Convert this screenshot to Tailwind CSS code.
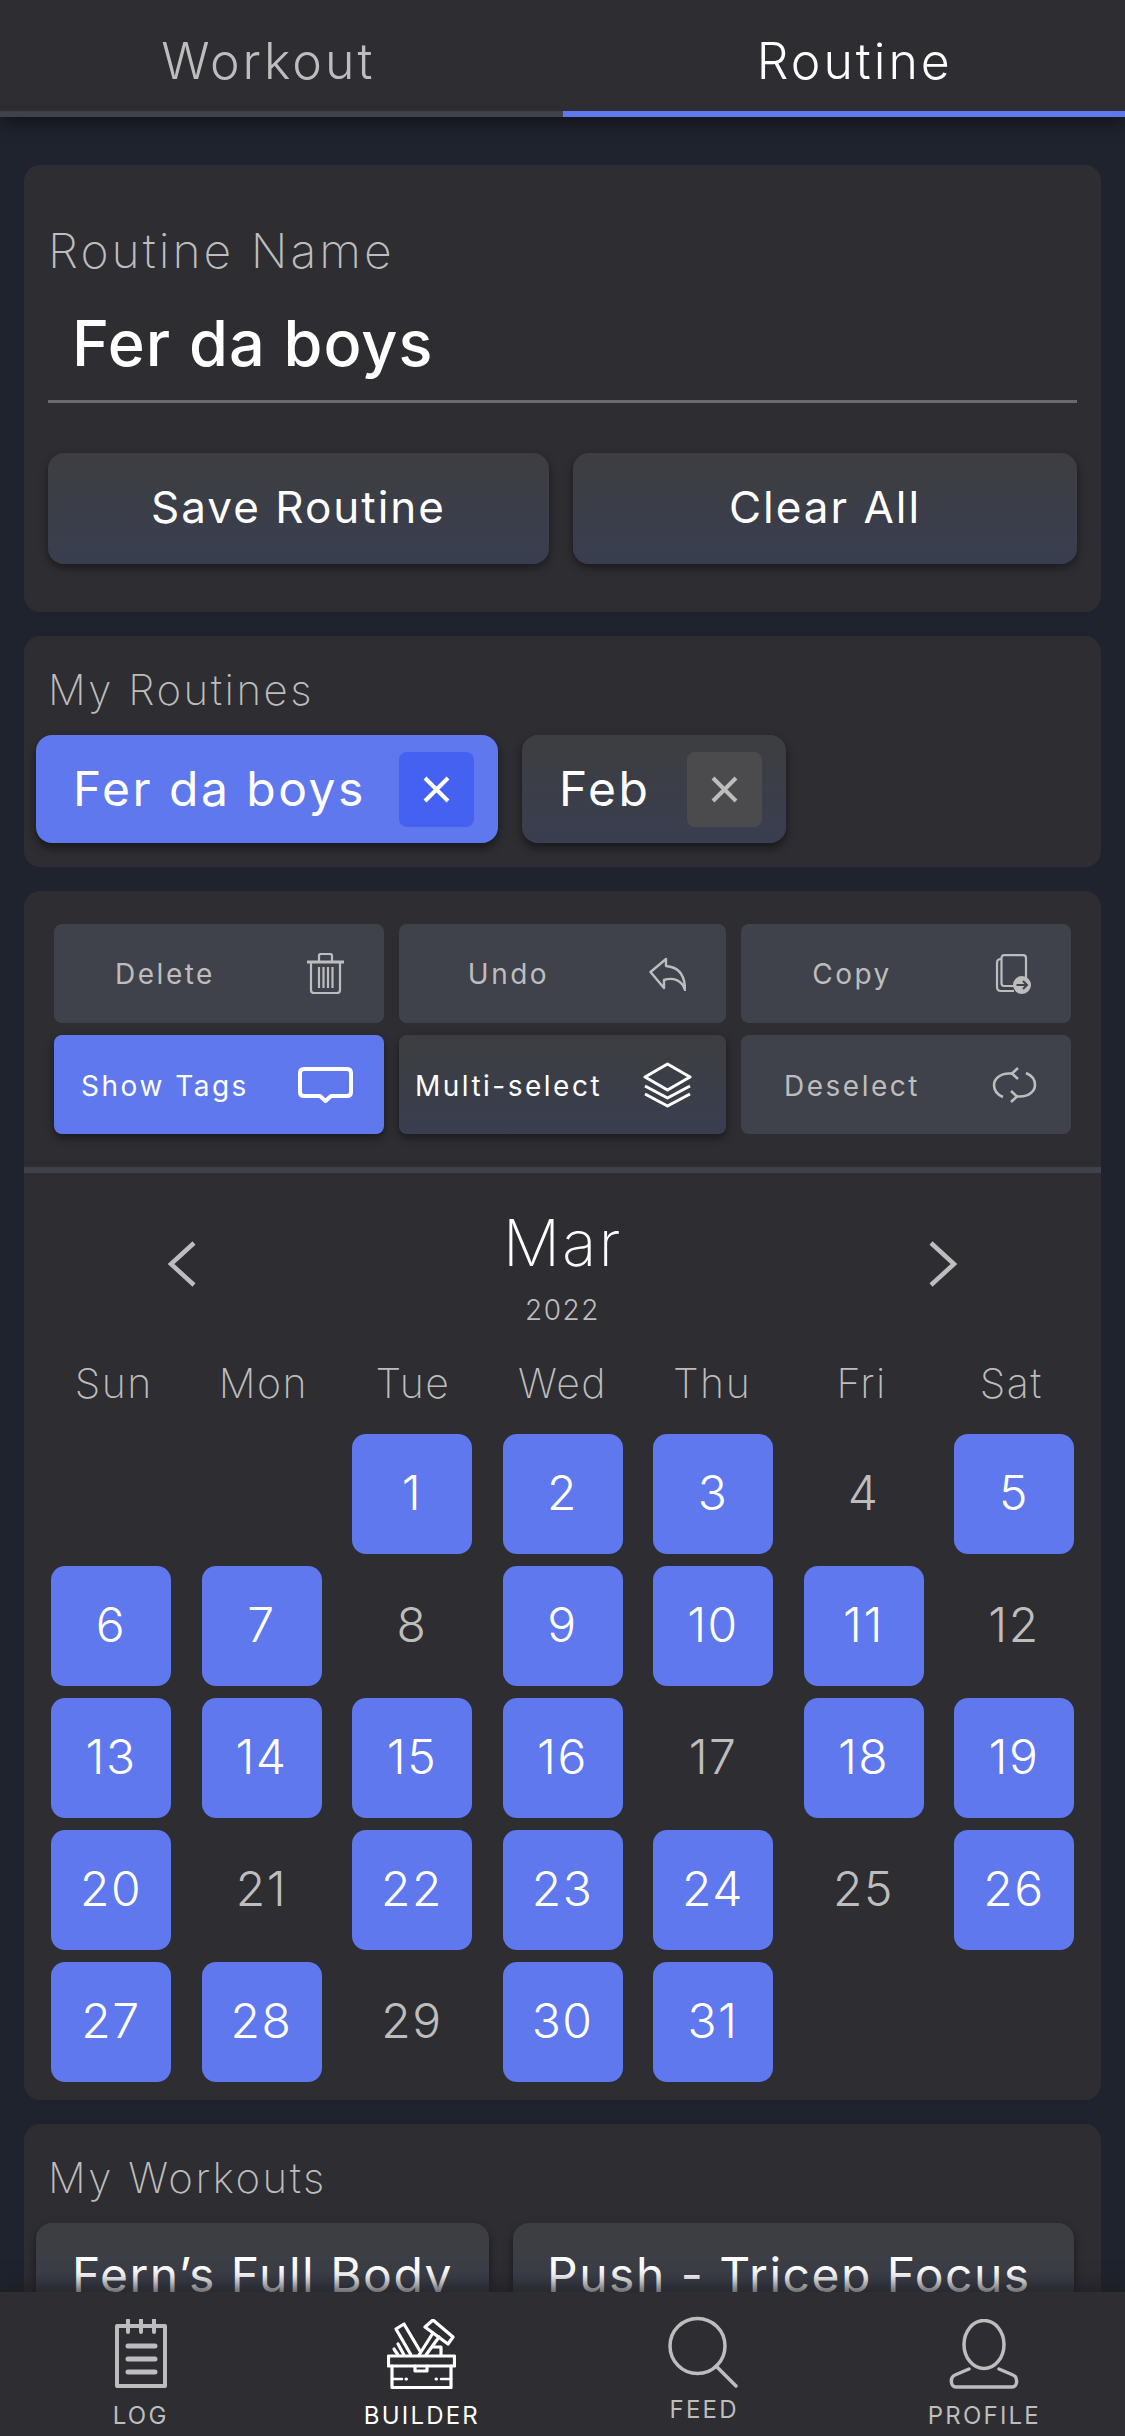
<!doctype html>
<html>
<head>
<meta charset="utf-8">
<script src="https://cdn.jsdelivr.net/npm/@tailwindcss/browser@4"></script>
</head>
<body class="bg-[#1f232d]">
<div class="w-[1125px] h-[2436px] flex flex-col overflow-hidden bg-[#1f232d] font-['Inter',sans-serif] text-[#bdbdbd]">

  <header class="relative z-10 h-[117px] shrink-0 grid grid-cols-2 bg-[#2d2d32] shadow-[0_6px_18px_rgba(0,0,0,0.45)]">
    <div class="flex items-center justify-center border-b-[6px] border-[#3f424b] text-[50px] font-light tracking-[3px] text-[#bdbdbd] pt-[12px] pr-[26px]">Workout</div>
    <div class="flex items-center justify-center border-b-[6px] border-[#5f78ee] text-[50px] font-light tracking-[3px] text-white pt-[12px] pl-[22px]">Routine</div>
  </header>

  <main class="flex-1 min-h-0 overflow-hidden px-[24px] pt-[48px] flex flex-col gap-[24px]">

    <section class="shrink-0 h-[447px] rounded-[16px] bg-[#2d2d32] px-[24px] pt-[56px]">
      <div class="h-[60px] flex items-center text-[48px] font-extralight tracking-[3px]">Routine Name</div>
      <div class="h-[122px] flex items-center pl-[24px] pt-[6px] border-b-[3px] border-[#6b6b6d] text-[63px] tracking-[1px] font-medium text-white">Fer da boys</div>
      <div class="mt-[50px] grid grid-cols-[501px_504px] gap-x-[24px]">
        <button class="h-[111px] pb-[4px] rounded-[16px] bg-linear-to-b from-[#3e3e40] to-[#393e50] shadow-[0_4px_8px_rgba(0,0,0,0.4)] text-[44px] font-normal tracking-[2px] text-white">Save Routine</button>
        <button class="h-[111px] pb-[4px] rounded-[16px] bg-linear-to-b from-[#3e3e40] to-[#393e50] shadow-[0_4px_8px_rgba(0,0,0,0.4)] text-[44px] font-normal tracking-[2px] text-white">Clear All</button>
      </div>
    </section>

    <section class="shrink-0 h-[231px] rounded-[16px] bg-[#2d2d32] px-[12px] pt-[28px]">
      <div class="h-[50px] pl-[12px] flex items-center text-[42px] font-extralight tracking-[2.5px]">My Routines</div>
      <div class="mt-[21px] flex gap-[24px]">
        <div class="w-[462px] h-[108px] pl-[37px] pr-[24px] flex items-center justify-between rounded-[16px] bg-[#5f78ee] shadow-[0_5px_10px_rgba(0,0,0,0.45)]">
          <span class="text-[48px] text-white tracking-[2.5px]">Fer da boys</span>
          <span class="w-[75px] h-[75px] rounded-[8px] bg-[#4561f2] flex items-center justify-center">
            <svg width="27" height="27" viewBox="0 0 27 27" fill="none" stroke="#fff" stroke-width="4"><path d="M2 2L25 25M25 2L2 25"/></svg>
          </span>
        </div>
        <div class="w-[264px] h-[108px] pl-[37px] pr-[24px] flex items-center justify-between rounded-[16px] bg-linear-to-b from-[#3e3e40] to-[#393e50] shadow-[0_5px_10px_rgba(0,0,0,0.45)]">
          <span class="text-[48px] text-white tracking-[2.5px]">Feb</span>
          <span class="w-[75px] h-[75px] rounded-[8px] bg-[#4b4b4d] flex items-center justify-center">
            <svg width="27" height="27" viewBox="0 0 27 27" fill="none" stroke="#bdbdbd" stroke-width="4"><path d="M2 2L25 25M25 2L2 25"/></svg>
          </span>
        </div>
      </div>
    </section>

    <section class="shrink-0 h-[1209px] rounded-[16px] bg-[#2d2d32] pt-[33px]">
      <div class="px-[30px] grid grid-cols-[330px_327px_330px] gap-x-[15px] gap-y-[12px] text-[28px] tracking-[2.5px]">
        <div class="h-[99px] rounded-[8px] bg-[#3f424b] grid grid-cols-[1fr_108px] items-center">
          <span class="text-center">Delete</span>
          <span class="flex justify-center pr-[10px]">
            <svg width="37" height="41" viewBox="0 0 37 41" fill="none" stroke="#bdbdbd" stroke-width="2.2"><path d="M0 9H37" stroke-width="3"/><path d="M12 8V2.5Q12 1 14 1H23Q25 1 25 2.500V8"/><path d="M4 10V37Q4 40 7 40H30Q33 40 33 37V10"/><path d="M12 14V35M16.500 14V35M21 14V35M25.500 14V35"/></svg>
          </span>
        </div>
        <div class="h-[99px] rounded-[8px] bg-[#3f424b] grid grid-cols-[1fr_108px] items-center">
          <span class="text-center">Undo</span>
          <span class="flex justify-center pr-[10px]">
            <svg width="37" height="34" viewBox="0 0 37 34" fill="none" stroke="#bdbdbd" stroke-width="2.4" stroke-linejoin="round"><path d="M17 2L1.500 15L15 31V23C24 20 33 23 36 33C36 19 30 10 17 9Z"/></svg>
          </span>
        </div>
        <div class="h-[99px] rounded-[8px] bg-[#3f424b] grid grid-cols-[1fr_108px] items-center">
          <span class="text-center">Copy</span>
          <span class="flex justify-center pr-[7px]">
            <svg width="37" height="40" viewBox="0 0 37 40" fill="none" stroke="#bdbdbd" stroke-width="2.2"><path d="M6 5Q2 5 2 9V33Q2 37 6 37H19"/><path d="M19 32H9Q6.500 32 6.500 29V4Q6.500 1.200 9 1.200H28Q31 1.200 31 4V25"/><circle cx="27" cy="31" r="9" fill="#bdbdbd" stroke="none"/><path d="M21.500 31H32M28 27L32 31L28 35" stroke="#3f424b" stroke-width="2"/></svg>
          </span>
        </div>
        <div class="h-[99px] rounded-[8px] bg-[#5f78ee] grid grid-cols-[1fr_108px] items-center text-white shadow-[0_4px_8px_rgba(0,0,0,0.4)]">
          <span class="text-center pt-[3px]">Show Tags</span>
          <span class="flex justify-center pr-[10px]">
            <svg width="55" height="36" viewBox="0 0 55 36" fill="none" stroke="#fff" stroke-width="4" stroke-linejoin="round"><path d="M6 2H49Q53 2 53 6V25Q53 29 49 29H33L27.500 34L22 29H6Q2 29 2 25V6Q2 2 6 2Z"/></svg>
          </span>
        </div>
        <div class="h-[99px] rounded-[8px] bg-linear-to-b from-[#3e3e40] to-[#393e50] grid grid-cols-[1fr_108px] items-center text-white shadow-[0_4px_8px_rgba(0,0,0,0.4)]">
          <span class="text-center whitespace-nowrap pt-[3px]">Multi-select</span>
          <span class="flex justify-center pr-[10px]">
            <svg width="49" height="46" viewBox="0 0 49 46" fill="none" stroke="#fff" stroke-width="3" stroke-linejoin="round"><path d="M24.500 2L47 15L24.500 28L2 15Z"/><path d="M2 24L24.500 36L47 24"/><path d="M2 32L24.500 44L47 32"/></svg>
          </span>
        </div>
        <div class="h-[99px] rounded-[8px] bg-[#3f424b] grid grid-cols-[1fr_108px] items-center">
          <span class="text-center pt-[3px]">Deselect</span>
          <span class="flex justify-center pr-[5px]">
            <svg width="45" height="36" viewBox="0 0 45 36" fill="none" stroke="#bdbdbd" stroke-width="2.6"><path d="M21 6.500H17C8 6.500 2 12 2 18C2 24 6 28 11 30"/><path d="M26 1L20 6.500L26 12"/><path d="M24 29.500H28C37 29.500 43 24 43 18C43 12 39 8 34 6"/><path d="M19 24L25 29.500L19 35"/></svg>
          </span>
        </div>
      </div>

      <div class="mt-[33px] h-[6px] bg-[#3f424b]"></div>

      <div class="mt-[36px] h-[121px] px-[143px] flex items-start justify-between">
        <svg width="30" height="46" viewBox="0 0 30 46" fill="none" stroke="#bdbdbd" stroke-width="4.500" class="mt-[32px]"><path d="M27 2L4 23L27 44"/></svg>
        <div class="flex flex-col items-center">
          <span class="text-[64px] leading-[72px] font-extralight tracking-[2px] text-white -mt-[2px]">Mar</span>
          <span class="mt-[14px] text-[28px] leading-[34px] font-light tracking-[1.5px]">2022</span>
        </div>
        <svg width="30" height="46" viewBox="0 0 30 46" fill="none" stroke="#bdbdbd" stroke-width="4.500" class="mt-[32px]"><path d="M3 2L26 23L3 44"/></svg>
      </div>

      <div class="mt-[28px] mb-[26px] px-[15px] grid grid-cols-7 text-center text-[41px] leading-[50px] font-extralight tracking-[1.5px]">
        <span>Sun</span><span>Mon</span><span>Tue</span><span>Wed</span><span>Thu</span><span>Fri</span><span>Sat</span>
      </div>

      <div class="px-[27px] grid grid-cols-7 gap-x-[30.5px] gap-y-[12px] text-[48px] tracking-[1.5px] font-light">
        <div></div><div></div>
        <div class="h-[120px] pb-[2px] rounded-[14px] bg-[#5f78ee] text-white flex items-center justify-center">1</div>
        <div class="h-[120px] pb-[2px] rounded-[14px] bg-[#5f78ee] text-white flex items-center justify-center">2</div>
        <div class="h-[120px] pb-[2px] rounded-[14px] bg-[#5f78ee] text-white flex items-center justify-center">3</div>
        <div class="h-[120px] pb-[2px] flex items-center justify-center">4</div>
        <div class="h-[120px] pb-[2px] rounded-[14px] bg-[#5f78ee] text-white flex items-center justify-center">5</div>

        <div class="h-[120px] pb-[2px] rounded-[14px] bg-[#5f78ee] text-white flex items-center justify-center">6</div>
        <div class="h-[120px] pb-[2px] rounded-[14px] bg-[#5f78ee] text-white flex items-center justify-center">7</div>
        <div class="h-[120px] pb-[2px] flex items-center justify-center">8</div>
        <div class="h-[120px] pb-[2px] rounded-[14px] bg-[#5f78ee] text-white flex items-center justify-center">9</div>
        <div class="h-[120px] pb-[2px] rounded-[14px] bg-[#5f78ee] text-white flex items-center justify-center">10</div>
        <div class="h-[120px] pb-[2px] rounded-[14px] bg-[#5f78ee] text-white flex items-center justify-center">11</div>
        <div class="h-[120px] pb-[2px] flex items-center justify-center">12</div>

        <div class="h-[120px] pb-[2px] rounded-[14px] bg-[#5f78ee] text-white flex items-center justify-center">13</div>
        <div class="h-[120px] pb-[2px] rounded-[14px] bg-[#5f78ee] text-white flex items-center justify-center">14</div>
        <div class="h-[120px] pb-[2px] rounded-[14px] bg-[#5f78ee] text-white flex items-center justify-center">15</div>
        <div class="h-[120px] pb-[2px] rounded-[14px] bg-[#5f78ee] text-white flex items-center justify-center">16</div>
        <div class="h-[120px] pb-[2px] flex items-center justify-center">17</div>
        <div class="h-[120px] pb-[2px] rounded-[14px] bg-[#5f78ee] text-white flex items-center justify-center">18</div>
        <div class="h-[120px] pb-[2px] rounded-[14px] bg-[#5f78ee] text-white flex items-center justify-center">19</div>

        <div class="h-[120px] pb-[2px] rounded-[14px] bg-[#5f78ee] text-white flex items-center justify-center">20</div>
        <div class="h-[120px] pb-[2px] flex items-center justify-center">21</div>
        <div class="h-[120px] pb-[2px] rounded-[14px] bg-[#5f78ee] text-white flex items-center justify-center">22</div>
        <div class="h-[120px] pb-[2px] rounded-[14px] bg-[#5f78ee] text-white flex items-center justify-center">23</div>
        <div class="h-[120px] pb-[2px] rounded-[14px] bg-[#5f78ee] text-white flex items-center justify-center">24</div>
        <div class="h-[120px] pb-[2px] flex items-center justify-center">25</div>
        <div class="h-[120px] pb-[2px] rounded-[14px] bg-[#5f78ee] text-white flex items-center justify-center">26</div>

        <div class="h-[120px] pb-[2px] rounded-[14px] bg-[#5f78ee] text-white flex items-center justify-center">27</div>
        <div class="h-[120px] pb-[2px] rounded-[14px] bg-[#5f78ee] text-white flex items-center justify-center">28</div>
        <div class="h-[120px] pb-[2px] flex items-center justify-center">29</div>
        <div class="h-[120px] pb-[2px] rounded-[14px] bg-[#5f78ee] text-white flex items-center justify-center">30</div>
        <div class="h-[120px] pb-[2px] rounded-[14px] bg-[#5f78ee] text-white flex items-center justify-center">31</div>
      </div>
    </section>

    <section class="shrink-0 h-[300px] rounded-t-[16px] bg-[#2d2d32] px-[12px] pt-[28px]">
      <div class="h-[50px] pl-[12px] flex items-center text-[42px] font-extralight tracking-[2.5px]">My Workouts</div>
      <div class="mt-[21px] flex gap-[24px]">
        <div class="w-[453px] h-[108px] pl-[36px] pb-[5px] flex items-center rounded-[16px] bg-linear-to-b from-[#3e3e40] to-[#393e50] shadow-[0_5px_10px_rgba(0,0,0,0.45)] text-[48px] text-white tracking-[1.5px] whitespace-nowrap">Fern’s Full Body</div>
        <div class="w-[561px] h-[108px] pl-[34px] pb-[5px] flex items-center rounded-[16px] bg-linear-to-b from-[#3e3e40] to-[#393e50] shadow-[0_5px_10px_rgba(0,0,0,0.45)] text-[48px] text-white tracking-[1.5px] whitespace-nowrap">Push - Tricep Focus</div>
      </div>
    </section>
  </main>

  <nav class="relative z-10 h-[144px] shrink-0 grid grid-cols-4 bg-[#2d2d32] shadow-[0_-8px_16px_rgba(30,30,35,0.75)] text-[24px] tracking-[2.2px]">
    <div class="flex flex-col items-center pt-[27px]">
      <svg width="52" height="69" viewBox="0 0 52 69" fill="none" stroke="#bdbdbd" stroke-width="4"><path d="M2 7H50V67H2Z" stroke-linejoin="round"/><path d="M13 1V13M26 1V13M39 1V13" stroke-linecap="round"/><path d="M13 27H40M13 40H40M13 53H40" stroke-width="5" stroke-linecap="round"/></svg>
      <span class="mt-[13px] leading-[30px]">LOG</span>
    </div>
    <div class="flex flex-col items-center pt-[27px] text-white">
      <svg width="69" height="70" viewBox="0 0 69 70" fill="none" stroke="#fff" stroke-width="3.200" stroke-linejoin="round" stroke-linecap="round"><rect x="1.500" y="37" width="66" height="10"/><path d="M5 47V68.500H64V47"/><path d="M28 47V52H40V47"/><path d="M5 60H15M54 60H64" stroke-width="2.500"/><path d="M19 60H19.500M49 60H49.500" stroke-width="3"/><path d="M38 8L46 1L66 18L61 25L38 8Z"/><path d="M32 36L46 14M39 36L52 18"/><path d="M9 10L17 5L33 32M9 10L24 36"/><path d="M11 25L17 36M7 30L11 36"/><path d="M47 28H54V36"/></svg>
      <span class="mt-[12px] leading-[30px]">BUILDER</span>
    </div>
    <div class="flex flex-col items-center pt-[24px]">
      <svg width="70" height="72" viewBox="0 0 70 72" fill="none" stroke="#bdbdbd" stroke-width="3.500" stroke-linecap="round"><circle cx="29.500" cy="30" r="27.500"/><path d="M48 50L68 70"/></svg>
      <span class="mt-[7px] ml-[2px] leading-[30px]">FEED</span>
    </div>
    <div class="flex flex-col items-center pt-[27px]">
      <svg width="70" height="70" viewBox="0 0 70 70" fill="none" stroke="#bdbdbd" stroke-width="3.500" stroke-linecap="round"><ellipse cx="35" cy="25.500" rx="20" ry="24"/><path d="M20 50L6 56C1 58 1 68 7 68H63C69 68 69 58 64 56L50 50"/></svg>
      <span class="mt-[12px] leading-[30px]">PROFILE</span>
    </div>
  </nav>
</div>
</body>
</html>
